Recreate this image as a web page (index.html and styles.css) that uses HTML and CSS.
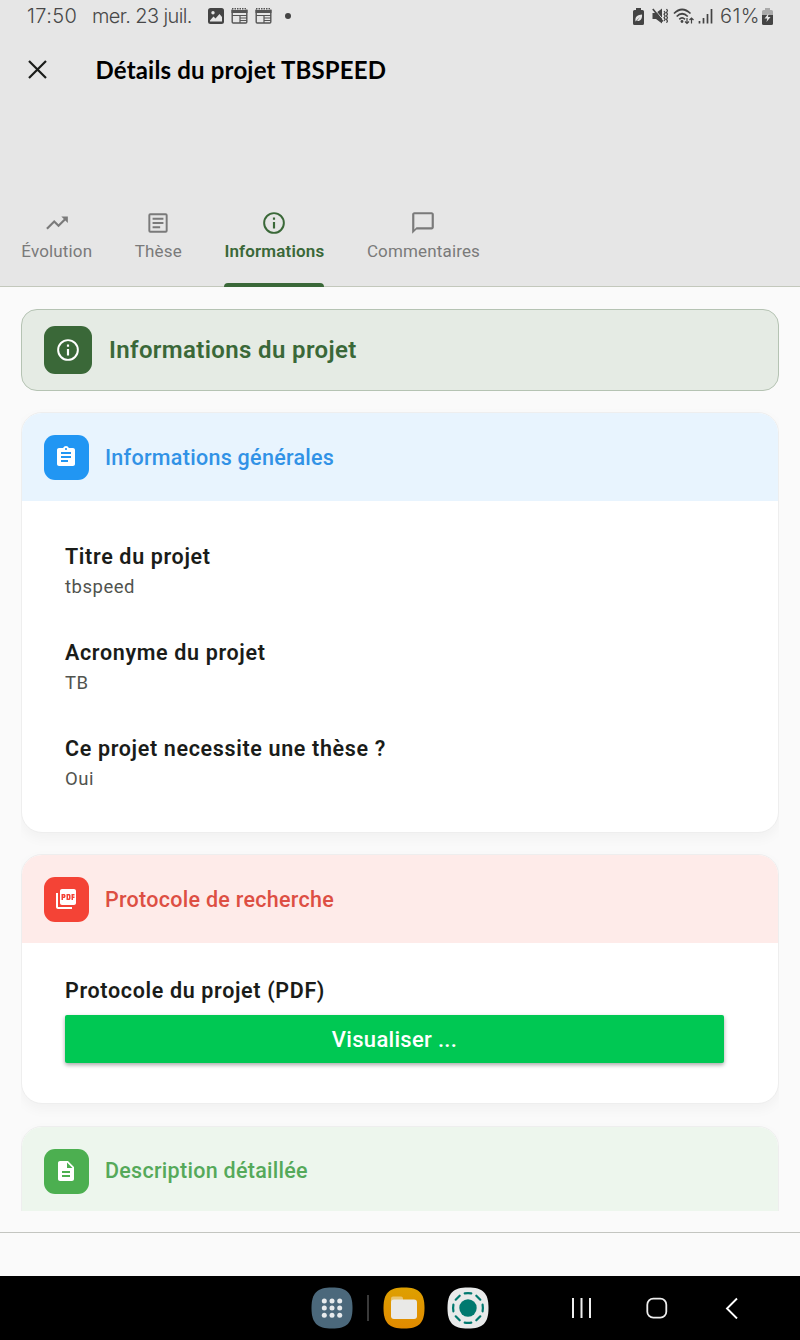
FILE: index.html
```html
<!DOCTYPE html>
<html lang="fr">
<head>
<meta charset="utf-8">
<title>Détails du projet TBSPEED</title>
<link rel="stylesheet" href="styles.css">
</head>
<body>
<div class="screen">
  <header class="top">
    <div class="status">
      <span class="time">17:50</span>
      <span class="date">mer. 23 juil.</span>
      <span class="notifs">
        <svg width="16" height="16" viewBox="0 0 16 16"><rect width="16" height="16" rx="2.500" fill="#444"/><path d="M2 12.500L5.500 8.500l2 2L11.500 6 14 9v4.500H2z" fill="#e6e6e6"/><circle cx="5" cy="4.700" r="1.700" fill="#e6e6e6"/></svg>
        <svg class="news" width="17" height="16" viewBox="0 0 17 16"><path d="M1.200 1.500v12.500q0 1 1 1h12.600q1 0 1-1V1.500" fill="none" stroke="#555" stroke-width="1.400"/><path d="M.5 2h16v3H.5z" fill="#555"/><path d="M1 .8h15" stroke="#555" stroke-width="1.500" stroke-dasharray="1.500 1"/><path d="M1 7.500h15M9 7.500V15M9 10h7M9 12.500h7" stroke="#555" stroke-width="1.200"/></svg>
        <svg class="news" width="17" height="16" viewBox="0 0 17 16"><path d="M1.200 1.500v12.500q0 1 1 1h12.600q1 0 1-1V1.500" fill="none" stroke="#555" stroke-width="1.400"/><path d="M.5 2h16v3H.5z" fill="#555"/><path d="M1 .8h15" stroke="#555" stroke-width="1.500" stroke-dasharray="1.500 1"/><path d="M1 7.500h15M9 7.500V15M9 10h7M9 12.500h7" stroke="#555" stroke-width="1.200"/></svg>
        <i class="dot"></i>
      </span>
      <span class="system">
        <svg width="11" height="17" viewBox="0 0 11 17"><path d="M3 0h5v2h1.500Q11 2 11 3.500v12Q11 17 9.500 17h-8Q0 17 0 15.500v-12Q0 2 1.500 2H3z" fill="#444"/><path d="M2.500 13.500C1.500 8 5 7 9 6.500c.5 4-1.500 7-5 6.500l3-4-4.500 4.500z" fill="#e6e6e6"/></svg>
        <svg class="mute" width="16" height="16" viewBox="0 0 16 16"><path d="M.5 5H4l6-4.500v15L4 11H.5z" fill="#444"/><path d="M1.500 .2l11 13" stroke="#e6e6e6" stroke-width="1"/><path d="M.8 1l10 12.500" stroke="#444" stroke-width="1.600"/><path d="M12 3l1.200 1.700L12 6.300 13.200 8 12 9.700l1.200 1.600L12 13M14.500 1l1 1.700-1 1.700 1 1.700-1 1.900 1 1.700-1 1.700 1 1.700-1 1.600" fill="none" stroke="#444" stroke-width="1.200"/></svg>
        <svg class="wifi" width="22" height="17" viewBox="0 0 22 17"><path d="M1 5.500Q9 -2.500 17.500 5.500M3.700 8.500Q9 3 14.800 8.500M6.300 11.300Q9 8.500 12 11.300" fill="none" stroke="#444" stroke-width="1.700"/><circle cx="9" cy="13.500" r="1.400" fill="#444"/><path d="M14 10v5.500M12 13.500l2 2 2-2M18.500 15.500V10M16.500 12l2-2 2 2" fill="none" stroke="#444" stroke-width="1.200"/></svg>
        <svg class="signal" width="15" height="16" viewBox="0 0 15 16"><path d="M1.500 13v2.500M5.500 10v5.500M9.500 6v9.500M13.500 1v14.500" stroke="#444" stroke-width="1.700"/></svg>
        <span class="pct">61%</span>
        <svg class="batt" width="11" height="17" viewBox="0 0 11 17"><path d="M3 0h5v2h1.500Q11 2 11 3.500V7H0V3.500Q0 2 1.500 2H3z" fill="#aaa"/><path d="M0 7h11v8.500Q11 17 9.500 17h-8Q0 17 0 15.500z" fill="#444"/><path d="M6.500 5.500L2.500 10.500h2.700l-.7 3.500 4-5H6z" fill="#e6e6e6"/></svg>
      </span>
    </div>
    <div class="appbar">
      <svg class="close" width="19" height="19" viewBox="0 0 19 19"><path d="M1 1l17 17M18 1L1 18" stroke="#1a1c19" stroke-width="2.200"/></svg>
      <h1>Détails du projet TBSPEED</h1>
    </div>
    <nav class="tabs">
      <div class="tab"><svg width="26" height="26" viewBox="0 0 24 24"><path fill="currentColor" d="M16 6l2.290 2.290-4.880 4.880-4-4L2 16.590 3.410 18l6-6 4 4 6.300-6.290L22 12V6z"/></svg><span>Évolution</span></div>
      <div class="tab"><svg width="26" height="26" viewBox="0 0 24 24"><path fill="none" stroke="currentColor" stroke-width="1.800" d="M4.900 4h14.200a.9.900 0 0 1 .9.900v14.200a.9.900 0 0 1-.9.900H4.900a.9.900 0 0 1-.9-.9V4.900a.9.900 0 0 1 .9-.9zM7 8h10M7 12h10M7 16h7"/></svg><span>Thèse</span></div>
      <div class="tab active"><svg width="26" height="26" viewBox="0 0 24 24"><circle cx="12" cy="12" r="9.100" fill="none" stroke="currentColor" stroke-width="1.800"/><path fill="currentColor" d="M11 7h2v2h-2zM11 11h2v6h-2z"/></svg><span>Informations</span></div>
      <div class="tab"><svg width="26" height="26" viewBox="0 0 24 24"><path fill="currentColor" d="M20 2H4c-1.100 0-2 .9-2 2v18l4-4h14c1.100 0 2-.9 2-2V4c0-1.100-.9-2-2-2zm0 14H6l-2 2V4h16v12z"/></svg><span>Commentaires</span></div>
    </nav>
  </header>

  <main class="content">
    <section class="banner">
      <span class="icon"><svg width="26" height="26" viewBox="0 0 24 24"><circle cx="12" cy="12" r="9.100" fill="none" stroke="#fff" stroke-width="1.800"/><path fill="#fff" d="M11 7h2v2h-2zM11 11h2v6h-2z"/></svg></span>
      <h2>Informations du projet</h2>
    </section>

    <section class="card general">
      <div class="head blue">
        <span class="icon"><svg width="24" height="24" viewBox="0 0 24 24"><path fill="#fff" d="M19 3h-4.180C14.400 1.840 13.300 1 12 1s-2.400.84-2.820 2H5c-1.100 0-2 .9-2 2v14c0 1.100.9 2 2 2h14c1.100 0 2-.9 2-2V5c0-1.100-.9-2-2-2zm-7 0c.55 0 1 .45 1 1s-.45 1-1 1-1-.45-1-1 .45-1 1-1zm2 14H7v-2h7v2zm3-4H7v-2h10v2zm0-4H7V7h10v2z"/></svg></span>
        <h3>Informations générales</h3>
      </div>
      <dl class="fields">
        <div><dt>Titre du projet</dt><dd>tbspeed</dd></div>
        <div><dt>Acronyme du projet</dt><dd>TB</dd></div>
        <div><dt>Ce projet necessite une thèse ?</dt><dd>Oui</dd></div>
      </dl>
    </section>

    <section class="card protocol">
      <div class="head red">
        <span class="icon"><svg width="24" height="24" viewBox="0 0 24 24"><path fill="#fff" d="M20 2H8c-1.100 0-2 .9-2 2v12c0 1.100.9 2 2 2h12c1.100 0 2-.9 2-2V4c0-1.100-.9-2-2-2zm-8.500 7.500c0 .83-.67 1.500-1.500 1.500H9v2H7.500V7H10c.83 0 1.500.67 1.500 1.500v1zm5 2c0 .83-.67 1.500-1.500 1.500h-2.500V7H15c.83 0 1.500.67 1.500 1.500v3zm4-3H19v1h1.500V11H19v2h-1.500V7h3v1.500zM9 9.500h1v-1H9v1zM4 6H2v14c0 1.100.9 2 2 2h14v-2H4V6zm10 5.500h1v-3h-1v3z"/></svg></span>
        <h3>Protocole de recherche</h3>
      </div>
      <div class="pdf">
        <p class="label">Protocole du projet (PDF)</p>
        <button type="button">Visualiser ...</button>
      </div>
    </section>

    <section class="card description">
      <div class="head green">
        <span class="icon"><svg width="24" height="24" viewBox="0 0 24 24"><path fill="#fff" d="M14 2H6c-1.100 0-1.990.9-1.990 2L4 20c0 1.100.89 2 1.990 2H18c1.100 0 2-.9 2-2V8l-6-6zm2 16H8v-2h8v2zm0-4H8v-2h8v2zm-3-5V3.500L18.500 9H13z"/></svg></span>
        <h3>Description détaillée</h3>
      </div>
    </section>
  </main>

  <div class="footer"></div>
  <nav class="sysbar">
    <svg class="apps" width="42" height="42" viewBox="0 0 42 42"><path d="M21 .5C36 .5 41.500 6 41.500 21S36 41.500 21 41.500.5 36 .5 21 6 .5 21 .5z" fill="#4b687b"/><g fill="#e8ebed"><circle cx="13.300" cy="14" r="2.500"/><circle cx="21" cy="14" r="2.500"/><circle cx="28.700" cy="14" r="2.500"/><circle cx="13.300" cy="21" r="2.500"/><circle cx="21" cy="21" r="2.500"/><circle cx="28.700" cy="21" r="2.500"/><circle cx="13.300" cy="28.200" r="2.500"/><circle cx="21" cy="28.200" r="2.500"/><circle cx="28.700" cy="28.200" r="2.500"/></g></svg>
    <i class="sep"></i>
    <svg class="folder" width="42" height="42" viewBox="0 0 42 42"><defs><linearGradient id="amber" x2="0" y2="1"><stop stop-color="#dea000"/><stop offset="1" stop-color="#e18a00"/></linearGradient></defs><path d="M21 .5C36 .5 41.500 6 41.500 21S36 41.500 21 41.500.5 36 .5 21 6 .5 21 .5z" fill="url(#amber)"/><path d="M8 16v-4.500Q8 9.500 10 9.500h8q2 0 2 2V16z" fill="#e9c46f"/><rect x="8" y="12.500" width="26" height="19.500" rx="3" fill="#e9e9e7"/></svg>
    <svg class="ring" width="42" height="42" viewBox="0 0 42 42"><path d="M21 .5C36 .5 41.500 6 41.500 21S36 41.500 21 41.500.5 36 .5 21 6 .5 21 .5z" fill="#e8eaea"/><circle cx="21" cy="21" r="8.700" fill="#00796f"/><path d="M17.700 6.400q3.300-.6 6.600 0M17.700 35.600q3.300.6 6.600 0M6.400 17.700q-.6 3.300 0 6.600M35.600 17.700q.6 3.300 0 6.600M8.700 12.700l4-4M29.300 8.700l4 4M8.700 29.300l4 4M29.300 33.300l4-4" fill="none" stroke="#00796f" stroke-width="2.200" stroke-linecap="round"/></svg>
    <svg class="recent" width="20" height="22" viewBox="0 0 20 22"><path d="M1 1v20M9.500 1v20M18 1v20" stroke="#eee" stroke-width="2"/></svg>
    <svg class="home" width="22" height="22" viewBox="0 0 22 22"><rect x="1.300" y="1.700" width="19" height="19" rx="6" fill="none" stroke="#eee" stroke-width="1.800"/></svg>
    <svg class="back" width="13" height="22" viewBox="0 0 13 22"><path d="M12 1.500L2 11.500l10 10" fill="none" stroke="#fff" stroke-width="1.900"/></svg>
  </nav>
</div>
</body>
</html>
```
FILE: styles.css
```css
* { box-sizing: border-box; margin: 0; padding: 0; }
body { font-family: Roboto, sans-serif; background: #fafafa; }
svg { display: block; flex: none; }
span, h1, h2, h3, dt, dd, .label { white-space: nowrap; }
.screen { width: 800px; height: 1340px; display: flex; flex-direction: column; overflow: hidden; }

.top { height: 287px; background: linear-gradient(#c3c8bc, #c3c8bc) 0 100% / 100% 1px no-repeat #e6e6e6; display: flex; flex-direction: column; flex: none; }
.status { height: 32px; display: flex; align-items: center; padding: 0 27px 0 27px; color: #484848; font: 300 20px/32px Inter, sans-serif; }
.time { width: 65px; letter-spacing: 0.4px; }
.date { width: 116px; letter-spacing: -0.6px; }
.notifs { display: flex; align-items: center; }
.news { margin-left: 7px; }
.dot { width: 6px; height: 6px; border-radius: 50%; background: #444; margin-left: 13px; }
.system { margin-left: auto; display: flex; align-items: center; }
.system .mute { margin-left: 8px; }
.system .wifi { margin-left: 5px; }
.system .signal { margin-left: 3px; }
.pct { margin-left: 7px; width: 39px; letter-spacing: 0.4px; }
.system .batt { margin-left: 3px; }

.appbar { height: 171px; display: flex; align-items: flex-start; padding: 28px 0 0 27.500px; }
.close { margin: 0 49px 0 0; }
h1 { font: 700 24px/20px Lato, sans-serif; color: #000; letter-spacing: 0.18px; }

.tabs { height: 84px; display: flex; align-items: stretch; }
.tab { padding: 7px 21.300px 0; display: flex; flex-direction: column; align-items: center; color: #7a7a7a; font-size: 17px; line-height: 22px; }
.tab span { margin-top: 4px; letter-spacing: 0.15px; }
.tab.active { color: #3a6838; font-weight: 600; }
.tab.active::after { content: ""; width: 100%; height: 4px; margin-top: auto; border-radius: 4px 4px 0 0; background: #3a6838; }

.content { height: 924px; margin: 0 21px; padding-top: 22px; overflow: hidden; flex: none; }
.banner { height: 82px; border: 1px solid #b5c3b3; border-radius: 16px; background: #e5ebe4; display: flex; align-items: center; padding-left: 22px; gap: 17px; }
.icon { display: flex; align-items: center; justify-content: center; width: 45px; height: 45px; border-radius: 11px; padding-right: 1px; }
.banner .icon { width: 48px; height: 48px; background: #3a6838; }
h2 { font-size: 24px; line-height: 30px; font-weight: 600; color: #3a6838; letter-spacing: 0.36px; }

.card { margin-top: 22px; border: 1px solid #eee; border-radius: 21px; background: #fff; box-shadow: 0 5px 13px rgba(0, 0, 0, 0.04); overflow: hidden; }
.general { height: 421px; margin-top: 21px; }
.protocol { height: 250px; margin-top: 21px; }
.description { height: 250px; }
.head { height: 88px; padding-left: 22px; display: flex; align-items: center; gap: 16px; }
h3 { font-size: 21.500px; line-height: 28px; font-weight: 500; letter-spacing: 0.28px; padding-top: 2px; }
.description h3 { padding-top: 0; }
.blue { background: #e8f4fe; color: #3192e6; }
.blue .icon { background: #2196f3; }
.red { background: #feebe9; color: #dd4f43; }
.red .icon { background: #f44336; }
.green { background: #edf6ed; color: #55a95a; }
.green .icon { background: #4caf50; }

.fields { padding: 41px 43px 0; }
.fields div { height: 96px; }
dt, .label { font-size: 21.500px; line-height: 30px; font-weight: 600; color: #1a1c19; letter-spacing: 0.65px; }
dd { font-size: 18.500px; line-height: 30px; color: #50534e; letter-spacing: 0.5px; }

.pdf { padding: 33px 54px 0 43px; }
button { display: block; width: 659px; height: 48px; margin-top: 9px; padding-top: 1px; border: 0; border-radius: 2px; background: #00c853; color: #fff; font: 500 22px/47px Roboto, sans-serif; letter-spacing: 0.3px; box-shadow: 0 2px 4px rgba(0, 0, 0, 0.35); }

.footer { height: 65px; flex: none; padding-top: 21px; }
.footer::before { content: ""; display: block; height: 1px; background: #c3c5c0; }

.sysbar { height: 64px; background: #000; display: flex; align-items: center; padding-left: 311px; flex: none; }
.sep { width: 2px; height: 26px; background: #3a3a3a; margin: 0 14px; }
.ring { margin-left: 22px; }
.recent { margin-left: 83px; }
.home { margin-left: 54px; }
.back { margin-left: 57px; }
```
